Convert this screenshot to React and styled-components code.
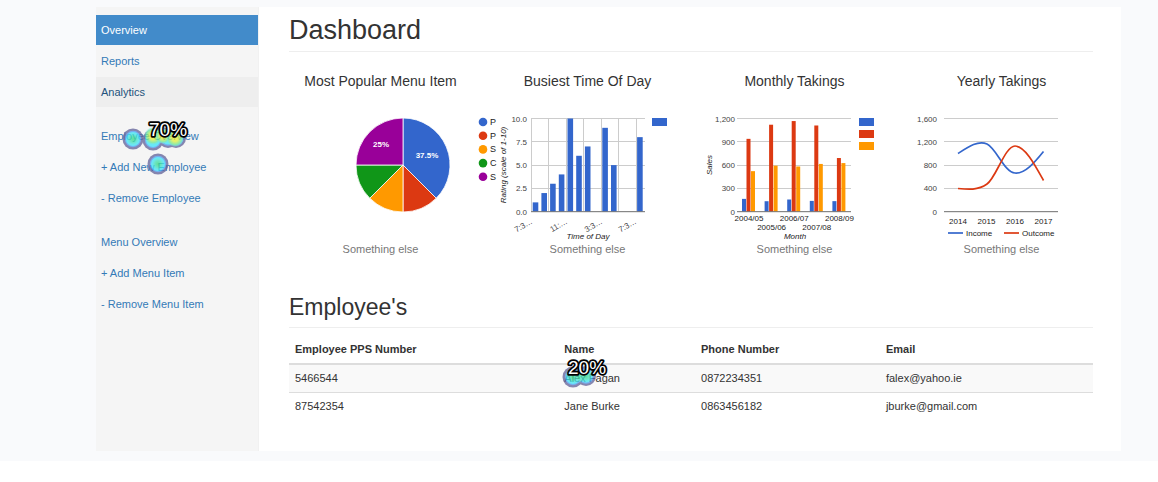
import React from "react";
import styled, { createGlobalStyle } from "styled-components";

const BLUE = "#3366cc";
const RED = "#dc3912";
const ORANGE = "#ff9900";
const GREEN = "#109618";
const PURPLE = "#990099";

const GlobalStyle = createGlobalStyle`
  *, *::before, *::after { box-sizing: border-box; }
  body {
    margin: 0;
    background: #fff;
    color: #333;
    font-family: "Liberation Sans", Arial, sans-serif;
    font-size: 11px;
    line-height: 15px;
  }
`;

const Page = styled.div`
  background: #f9fafc;
  padding: 7px 37px 10px 96px;
`;

const Panel = styled.div`
  display: flex;
  background: #fff;
`;

const Sidebar = styled.nav`
  flex: 0 0 163px;
  display: flex;
  flex-direction: column;
  gap: 14px;
  padding-top: 8px;
  background: #f5f5f5;
  border-right: 1px solid #f1f1f1;
`;

const NavGroup = styled.ul`
  display: flex;
  flex-direction: column;
  gap: 1px;
  margin: 0;
  padding: 0;
  list-style: none;
`;

const NavItem = styled.li`
  position: relative;
`;

const NavLink = styled.a`
  display: block;
  padding: 0 5px;
  line-height: 30px;
  text-decoration: none;
  color: ${(p) => (p.$state === "active" ? "#fff" : p.$state === "hover" ? "#23527c" : "#337ab7")};
  background: ${(p) => (p.$state === "active" ? "#428bca" : p.$state === "hover" ? "#eee" : "transparent")};
`;

const Main = styled.main`
  flex: 1;
  min-width: 0;
  padding: 8px 28px 31px 30px;
`;

const PageTitle = styled.h1`
  margin: 0 0 19px;
  padding-bottom: 6px;
  border-bottom: 1px solid #eee;
  font-size: 27px;
  line-height: 30px;
  font-weight: 400;
`;

const SectionTitle = styled.h2`
  margin: 38px 0 8px;
  padding-bottom: 7px;
  border-bottom: 1px solid #eee;
  font-size: 23px;
  line-height: 26px;
  font-weight: 400;
`;

const ChartRow = styled.div`
  display: grid;
  grid-template-columns: repeat(4, 1fr);
  margin: 0 -12px;
`;

const ChartCard = styled.figure`
  display: flex;
  flex-direction: column;
  align-items: center;
  margin: 0;
`;

const ChartTitle = styled.h3`
  margin: 0 0 14px;
  font-size: 14px;
  line-height: 20px;
  font-weight: 400;
`;

const Drawing = styled.svg`
  display: block;
  width: 207px;
  height: 137px;
  overflow: visible;
  font-size: 8px;
`;

const Caption = styled.figcaption`
  line-height: 14px;
  color: #777;
`;

const Table = styled.table`
  width: 100%;
  border-collapse: separate;
  border-spacing: 0;
`;

const Column = styled.col`
  width: ${(p) => p.$share};
`;

const HeadCell = styled.th`
  padding: 6px;
  text-align: left;
  border-bottom: 2px solid #ddd;
`;

const Row = styled.tr`
  background: ${(p) => (p.$striped ? "#f9f9f9" : "#fff")};
`;

const Cell = styled.td`
  position: relative;
  padding: 6px;
  border-top: ${(p) => (p.$first ? "0" : "1px solid #ddd")};
`;

const HeatOverlay = styled.svg`
  position: absolute;
  z-index: 1;
  left: ${(p) => p.$left}px;
  top: ${(p) => p.$top}px;
  pointer-events: none;
  font-size: 19px;
`;

function HeatSpot({ id, left, top, width, height, spots, cores, label, labelX, labelY }) {
  return (
    <HeatOverlay $left={left} $top={top} width={width} height={height} aria-hidden="true">
      <defs>
        <radialGradient id={id}>
          <stop offset="0" stopColor="#ffee20" />
          <stop offset="0.4" stopColor="#d8f040" />
          <stop offset="0.75" stopColor="#63e69a" />
          <stop offset="1" stopColor="#48e4e8" stopOpacity="0" />
        </radialGradient>
        <radialGradient id={id + "-cool"}>
          <stop offset="0" stopColor="#30d880" />
          <stop offset="0.5" stopColor="#40e0b8" />
          <stop offset="1" stopColor="#48e4f0" stopOpacity="0" />
        </radialGradient>
      </defs>
      <g opacity="0.75">
        {spots.map(([x, y, r], i) => <circle key={i} cx={x} cy={y} r={r} fill="#606098" />)}
        {spots.map(([x, y, r], i) => <circle key={i} cx={x} cy={y} r={r - 2.3} fill="#4a98ee" />)}
        {spots.map(([x, y, r], i) => <circle key={i} cx={x} cy={y} r={r - 3.5} fill="#38e4fa" />)}
        {cores.map(([x, y, r, cool], i) => (
          <circle key={i} cx={x} cy={y} r={r} fill={`url(#${id}${cool ? "-cool" : ""})`} />
        ))}
      </g>
      <text x={labelX} y={labelY} fill="#fff" stroke="#000" strokeWidth="3.5" strokeLinejoin="round" paintOrder="stroke">
        {label}
      </text>
    </HeatOverlay>
  );
}

const PIE = [
  { share: 0.375, color: BLUE, name: "P" },
  { share: 0.125, color: RED, name: "P" },
  { share: 0.125, color: ORANGE, name: "S" },
  { share: 0.125, color: GREEN, name: "C" },
  { share: 0.25, color: PURPLE, name: "S" },
];

function PieChart() {
  const cx = 126, cy = 60, r = 47;
  const point = (f) => `${cx + r * Math.sin(f * 2 * Math.PI)} ${cy - r * Math.cos(f * 2 * Math.PI)}`;
  let start = 0;
  return (
    <Drawing>
      {PIE.map((s, i) => {
        const from = start;
        start += s.share;
        return (
          <path key={i} d={`M${cx} ${cy}L${point(from)}A${r} ${r} 0 0 1 ${point(start)}Z`} fill={s.color} stroke="#fff" strokeWidth="0.8" />
        );
      })}
      <g fill="#fff" fontWeight="700" fontSize="8" textAnchor="middle">
        <text x="150" y="53">37.5%</text>
        <text x="104" y="42">25%</text>
      </g>
      {PIE.map((s, i) => (
        <g key={i}>
          <circle cx="206" cy={17 + i * 13.7} r="4.3" fill={s.color} />
          <text x="213" y={20 + i * 13.7} fill="#222" fontSize="9">{s.name}</text>
        </g>
      ))}
    </Drawing>
  );
}

const TOP = 13.5;
const STEP = 23.3;
const BASE = TOP + STEP * 4;

function ValueAxis({ labels, labelX, x1, x2 }) {
  return (
    <g shapeRendering="crispEdges">
      {labels.map((l, i) => (
        <React.Fragment key={l}>
          <line x1={x1} x2={x2} y1={TOP + i * STEP} y2={TOP + i * STEP} stroke="#ccc" />
          <text x={labelX} y={TOP + 3 + i * STEP} textAnchor="end" fill="#444">{l}</text>
        </React.Fragment>
      ))}
    </g>
  );
}

const BUSY = [[0, 1], [1, 2], [2, 3], [3, 4], [4, 10], [5, 6], [6, 7], [8, 9], [9, 5], [12, 8]];
const BUSY_TICKS = [["7:3…", 49], ["11:…", 84], ["3:3…", 119], ["7:3…", 153]];

function BusyChart() {
  return (
    <Drawing>
      <ValueAxis labels={["10.0", "7.5", "5.0", "2.5", "0.0"]} labelX={43} x1={47} x2={161} />
      {[47, 64, 82, 99, 117, 134, 152].map((x) => (
        <line key={x} x1={x + 0.5} x2={x + 0.5} y1={TOP} y2={BASE} stroke="#ccc" />
      ))}
      {BUSY.map(([slot, v]) => (
        <rect key={slot} x={48.7 + slot * 8.7} width="5.6" y={BASE - v * 9.32} height={v * 9.32} fill={BLUE} />
      ))}
      <line x1="47" x2="161" y1={BASE} y2={BASE} stroke="#777" />
      {BUSY_TICKS.map(([t, x], i) => (
        <text key={i} textAnchor="end" fill="#444" transform={`translate(${x} 118) rotate(-30)`}>{t}</text>
      ))}
      <g fill="#222" fontStyle="italic" textAnchor="middle">
        <text x="104" y="134">Time of Day</text>
        <text transform="translate(22 60) rotate(-90)">Rating (scale of 1-10)</text>
      </g>
      <rect x="168" y="13" width="15" height="8" fill={BLUE} />
    </Drawing>
  );
}

const MONTHLY = [
  ["2004/05", 165, 938, 522],
  ["2005/06", 135, 1120, 593],
  ["2006/07", 157, 1167, 582],
  ["2007/08", 139, 1110, 615],
  ["2008/09", 136, 691, 626],
];

function MonthlyChart() {
  const unit = (STEP * 4) / 1200;
  return (
    <Drawing>
      <ValueAxis labels={["1,200", "900", "600", "300", "0"]} labelX={44} x1={46} x2={160} />
      {MONTHLY.map(([month, ...values], i) => (
        <g key={month}>
          {values.map((v, k) => (
            <rect key={k} x={51 + i * 22.6 + k * 4.5} width="4" y={BASE - v * unit} height={v * unit} fill={[BLUE, RED, ORANGE][k]} />
          ))}
          <text x={58 + i * 22.6} y={i % 2 ? 125 : 116} textAnchor="middle" fill="#222">{month}</text>
        </g>
      ))}
      <line x1="46" x2="160" y1={BASE} y2={BASE} stroke="#777" />
      <g fill="#222" fontStyle="italic" textAnchor="middle">
        <text x="104" y="134">Month</text>
        <text transform="translate(21 60) rotate(-90)">Sales</text>
      </g>
      {[BLUE, RED, ORANGE].map((c, i) => (
        <rect key={c} x="168" y={13 + i * 12} width="15" height="8" fill={c} />
      ))}
    </Drawing>
  );
}

function YearlyChart() {
  return (
    <Drawing>
      <ValueAxis labels={["1,600", "1,200", "800", "400", "0"]} labelX={39} x1={46} x2={160} />
      <line x1="46" x2="160" y1={BASE} y2={BASE} stroke="#777" />
      <g fill="none" strokeWidth="1.7">
        <path d="M60 48.5C70 42 80 35 89 39C98 43 107 68 117 68C127 69 137 57 145.5 46.5" stroke={BLUE} />
        <path d="M60 83.5C70 84.5 80 85.5 89 79C98 73 107 41 117 41C127 41 137 60 145.5 75.5" stroke={RED} />
        <path d="M50 128H65" stroke={BLUE} />
        <path d="M106 128H121" stroke={RED} />
      </g>
      <g fill="#222">
        {[2014, 2015, 2016, 2017].map((y, i) => (
          <text key={y} x={60 + i * 28.5} y="119" textAnchor="middle">{y}</text>
        ))}
        <text x="68" y="131">Income</text>
        <text x="124" y="131">Outcome</text>
      </g>
    </Drawing>
  );
}

const CHARTS = [
  ["Most Popular Menu Item", PieChart],
  ["Busiest Time Of Day", BusyChart],
  ["Monthly Takings", MonthlyChart],
  ["Yearly Takings", YearlyChart],
];

const NAV = [
  [{ text: "Overview", state: "active" }, { text: "Reports" }, { text: "Analytics", state: "hover" }],
  [{ text: "Employee Overview", hot: true }, { text: "+ Add New Employee" }, { text: "- Remove Employee" }],
  [{ text: "Menu Overview" }, { text: "+ Add Menu Item" }, { text: "- Remove Menu Item" }],
];

const EMPLOYEES = [
  { pps: "5466544", name: "Alex Fagan", phone: "0872234351", email: "falex@yahoo.ie", hot: true },
  { pps: "87542354", name: "Jane Burke", phone: "0863456182", email: "jburke@gmail.com" },
];

export default function App() {
  return (
    <>
      <GlobalStyle />
      <Page>
        <Panel>
          <Sidebar>
            {NAV.map((group, g) => (
              <NavGroup key={g}>
                {group.map((item) => (
                  <NavItem key={item.text}>
                    <NavLink href="#" $state={item.state}>{item.text}</NavLink>
                    {item.hot && (
                      <HeatSpot
                        id="heat-nav" left={20} top={-6} width={80} height={64}
                        spots={[[17, 24, 10.5], [37, 25, 10.5], [46, 21, 9], [52, 23, 10], [60, 23, 10], [42, 49, 10.5]]}
                        cores={[[17, 24, 7, true], [37, 21, 9], [47, 21, 8], [59, 23, 9], [42, 49, 7, true]]}
                        label="70%" labelX={33} labelY={21}
                      />
                    )}
                  </NavItem>
                ))}
              </NavGroup>
            ))}
          </Sidebar>
          <Main>
            <PageTitle>Dashboard</PageTitle>
            <ChartRow>
              {CHARTS.map(([title, Chart]) => (
                <ChartCard key={title}>
                  <ChartTitle>{title}</ChartTitle>
                  <Chart />
                  <Caption>Something else</Caption>
                </ChartCard>
              ))}
            </ChartRow>
            <SectionTitle>Employee's</SectionTitle>
            <Table>
              <colgroup>
                <Column $share="33.5%" />
                <Column $share="17%" />
                <Column $share="23%" />
                <Column $share="26.5%" />
              </colgroup>
              <thead>
                <tr>
                  <HeadCell scope="col">Employee PPS Number</HeadCell>
                  <HeadCell scope="col">Name</HeadCell>
                  <HeadCell scope="col">Phone Number</HeadCell>
                  <HeadCell scope="col">Email</HeadCell>
                </tr>
              </thead>
              <tbody>
                {EMPLOYEES.map((e, i) => (
                  <Row key={e.pps} $striped={i % 2 === 0}>
                    <Cell $first={i === 0}>{e.pps}</Cell>
                    <Cell $first={i === 0}>
                      {e.name}
                      {e.hot && (
                        <HeatSpot
                          id="heat-cell" left={0} top={-12} width={60} height={40}
                          spots={[[15, 24, 10.5], [22, 23, 8], [28, 23, 10]]}
                          cores={[[15, 24, 7, true], [22, 23, 7, true], [28, 23, 7, true]]}
                          label="20%" labelX={10} labelY={21}
                        />
                      )}
                    </Cell>
                    <Cell $first={i === 0}>{e.phone}</Cell>
                    <Cell $first={i === 0}>{e.email}</Cell>
                  </Row>
                ))}
              </tbody>
            </Table>
          </Main>
        </Panel>
      </Page>
    </>
  );
}
